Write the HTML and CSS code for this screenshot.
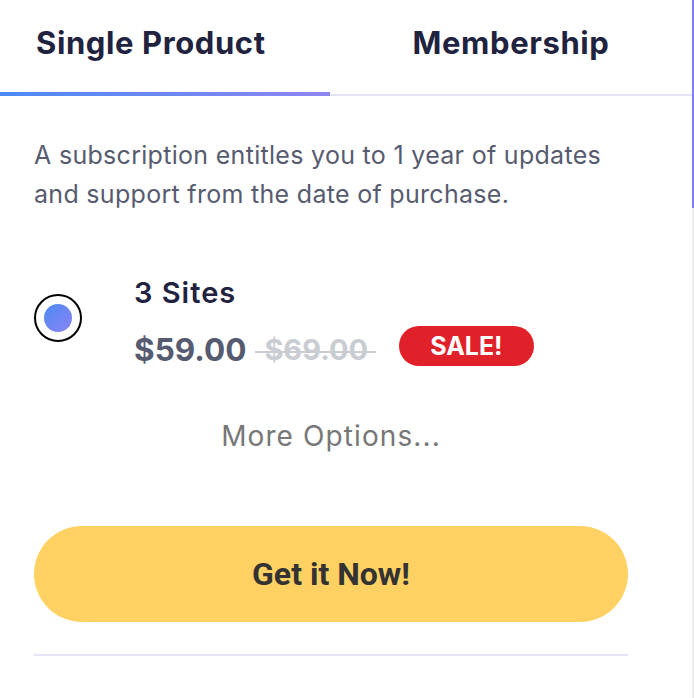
FILE: index.html
```html
<!DOCTYPE html>
<html>
<head>
<meta charset="utf-8">
<link rel="stylesheet" href="styles.css">
</head>
<body>
<div class="page">
  <div class="card">
    <div class="tabs">
      <div class="tab tab-active">Single Product</div>
      <div class="tab tab-other">Membership</div>
    </div>
    <div class="content">
      <p class="desc">A subscription entitles you to 1 year of updates and support from the date of purchase.</p>
      <div class="option">
        <div class="radio"><div class="radio-dot"></div></div>
        <div class="option-info">
          <div class="option-title">3 Sites</div>
          <div class="price-row">
            <span class="price">$59.00</span>
            <span class="old-price">$69.00</span>
            <span class="sale">SALE!</span>
          </div>
        </div>
      </div>
      <div class="more">More Options...</div>
      <button class="buy">Get it Now!</button>
      <div class="divider"></div>
    </div>
  </div>
  <div class="edge"><div class="edge-thumb"></div></div>
</div>
</body>
</html>
```

FILE: styles.css
```css
html, body {
  margin: 0;
  padding: 0;
  background: #ffffff;
}
body {
  width: 694px;
  height: 698px;
  overflow: hidden;
}
.page {
  display: flex;
  height: 698px;
}
.card {
  flex: 1;
}
.edge {
  width: 2px;
  background: #ededed;
  display: flex;
  flex-direction: column;
}
.edge-thumb {
  height: 208px;
  background: #7f80f2;
}
.tabs {
  display: flex;
  height: 96px;
  border-bottom: 2px solid #e5e3f7;
  box-sizing: border-box;
}
.tab {
  font-family: Inter, "Liberation Sans", sans-serif;
  font-weight: 700;
  font-size: 31px;
  line-height: 36px;
  letter-spacing: 0.6px;
  color: #1f2340;
  padding-top: 25px;
  box-sizing: border-box;
}
.tab-active {
  width: 330px;
  padding-left: 36px;
  border-bottom: 4px solid transparent;
  border-image: linear-gradient(90deg, #4c8af4, #8d85f1) 1;
  margin-bottom: -2px;
}
.tab-other {
  flex: 1;
  text-align: center;
}
.content {
  padding: 0 64px 0 34px;
}
.desc {
  font-family: Inter, "Liberation Sans", sans-serif;
  font-size: 25px;
  line-height: 39px;
  letter-spacing: 0.3px;
  color: #575b70;
  margin: 40px 0 0 0;
}
.option {
  display: flex;
  align-items: flex-start;
  margin-top: 62px;
}
.radio {
  width: 44px;
  height: 44px;
  margin-top: 18px;
  border: 2px solid #000;
  border-radius: 50%;
  display: flex;
  align-items: center;
  justify-content: center;
  flex-shrink: 0;
}
.radio-dot {
  width: 28px;
  height: 28px;
  border-radius: 50%;
  background: linear-gradient(135deg, #4c8af4, #8b84f3);
}
.option-info {
  margin-left: 52px;
  display: flex;
  flex-direction: column;
}
.option-title {
  font-family: Inter, "Liberation Sans", sans-serif;
  font-weight: 600;
  font-size: 29px;
  line-height: 34px;
  letter-spacing: 1px;
  color: #1f2340;
}
.price-row {
  display: flex;
  align-items: center;
  margin-top: 16px;
}
.price {
  font-family: Inter, "Liberation Sans", sans-serif;
  font-weight: 700;
  font-size: 31.5px;
  line-height: 40px;
  color: #575b70;
}
.old-price {
  position: relative;
  font-family: Inter, "Liberation Sans", sans-serif;
  font-weight: 700;
  font-size: 29px;
  line-height: 40px;
  color: #c9cdd2;
  margin-left: 9px;
  padding: 0 8px 0 9px;
}
.old-price::after {
  content: "";
  position: absolute;
  left: 0;
  right: 0;
  top: 21px;
  height: 2px;
  background: #c9cdd2;
}
.sale {
  display: flex;
  align-items: center;
  height: 40px;
  margin-bottom: 8px;
  padding: 0 31px;
  border-radius: 20px;
  background: #e12129;
  font-family: Inter, "Liberation Sans", sans-serif;
  font-weight: 700;
  font-size: 25px;
  color: #ffffff;
  margin-left: 23px;
}
.more {
  font-family: Inter, "Liberation Sans", sans-serif;
  font-size: 28px;
  line-height: 34px;
  letter-spacing: 1.1px;
  color: #777777;
  text-align: center;
  margin-top: 45px;
}
.buy {
  display: block;
  width: 100%;
  height: 96px;
  margin-top: 73px;
  border: none;
  border-radius: 48px;
  background: #fed162;
  font-family: Roboto, "Liberation Sans", sans-serif;
  font-weight: 700;
  font-size: 32px;
  color: #333333;
  cursor: pointer;
}
.divider {
  height: 2px;
  background: #e5e3f7;
  margin-top: 32px;
}
```
